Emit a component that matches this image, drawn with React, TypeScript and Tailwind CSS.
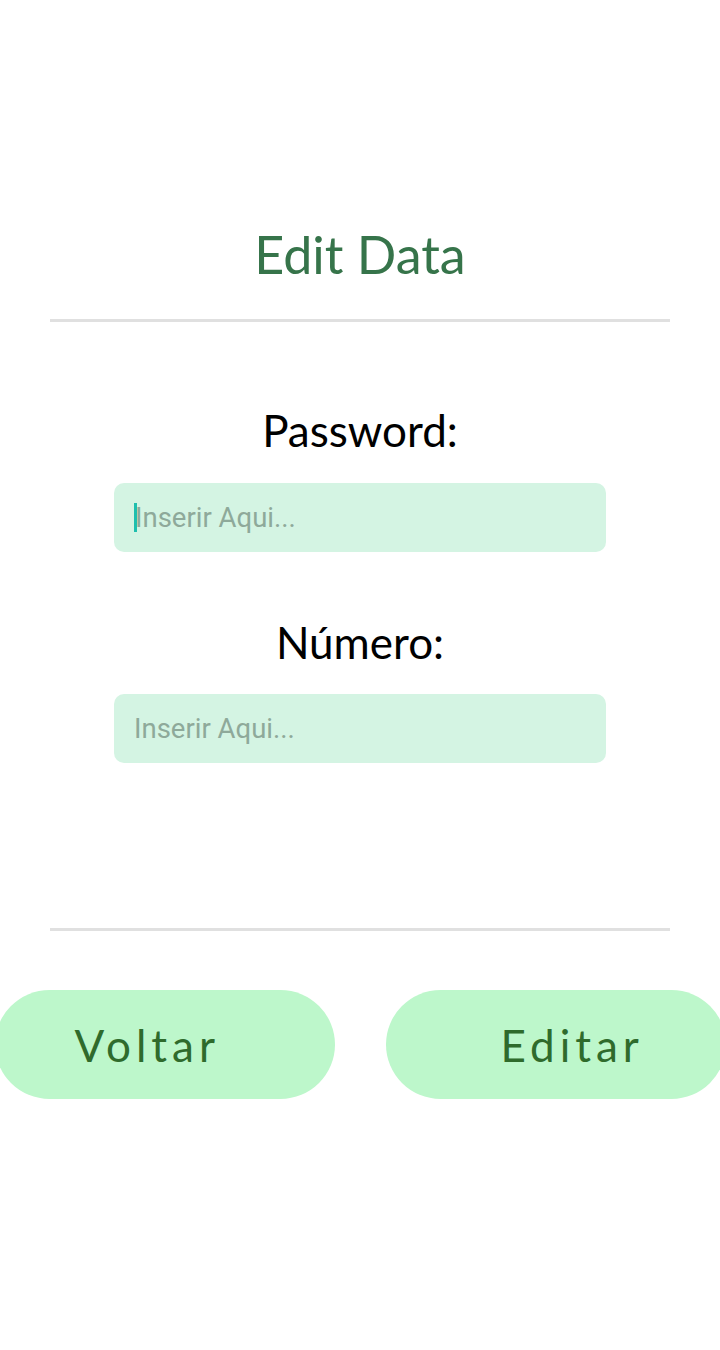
export default function App() {
  return (
    <div className="relative h-[1350px] w-[720px] overflow-hidden bg-white" style={{ fontFamily: "Lato, 'Noto Sans', sans-serif" }}>
      <div className="flex flex-col items-center pt-[218px]">
        {/* Title */}
        <h1 className="text-[52px] leading-[72px] text-[#36744a]">Edit Data</h1>
        <div className="mt-[29px] h-[3px] w-[620px] bg-[#e0e0e0]" />

        {/* Password */}
        <label className="mt-[80px] text-[44px] leading-[56px] text-black">Password:</label>
        <div className="mt-[25px] flex h-[69px] w-[492px] items-center rounded-[10px] bg-[#d4f4e3] pl-[20px]">
          <span className="mr-[-2px] h-[29px] w-[3px] bg-[#1fbfae]" />
          <span className="text-[27.5px] text-[#8ea99a]" style={{ fontFamily: "Roboto, sans-serif" }}>
            Inserir Aqui...
          </span>
        </div>

        {/* Número */}
        <label className="mt-[62px] text-[44px] leading-[56px] text-black">Número:</label>
        <div className="mt-[24px] flex h-[69px] w-[492px] items-center rounded-[10px] bg-[#d4f4e3] pl-[20px]">
          <span className="text-[27.5px] text-[#8ea99a]" style={{ fontFamily: "Roboto, sans-serif" }}>
            Inserir Aqui...
          </span>
        </div>

        <div className="mt-[165px] h-[3px] w-[620px] bg-[#e0e0e0]" />

        {/* Buttons */}
        <div className="mt-[59px] flex w-full justify-center gap-[51px]">
          <button className="flex h-[109px] w-[340px] shrink-0 items-center rounded-full bg-[#bdf7cb] pl-[80px] text-[44px] tracking-[5px] text-[#2f6b2c]">
            Voltar
          </button>
          <button className="flex h-[109px] w-[340px] shrink-0 items-center rounded-full bg-[#bdf7cb] pl-[115px] text-[44px] tracking-[5px] text-[#2f6b2c]">
            Editar
          </button>
        </div>
      </div>
    </div>
  );
}
